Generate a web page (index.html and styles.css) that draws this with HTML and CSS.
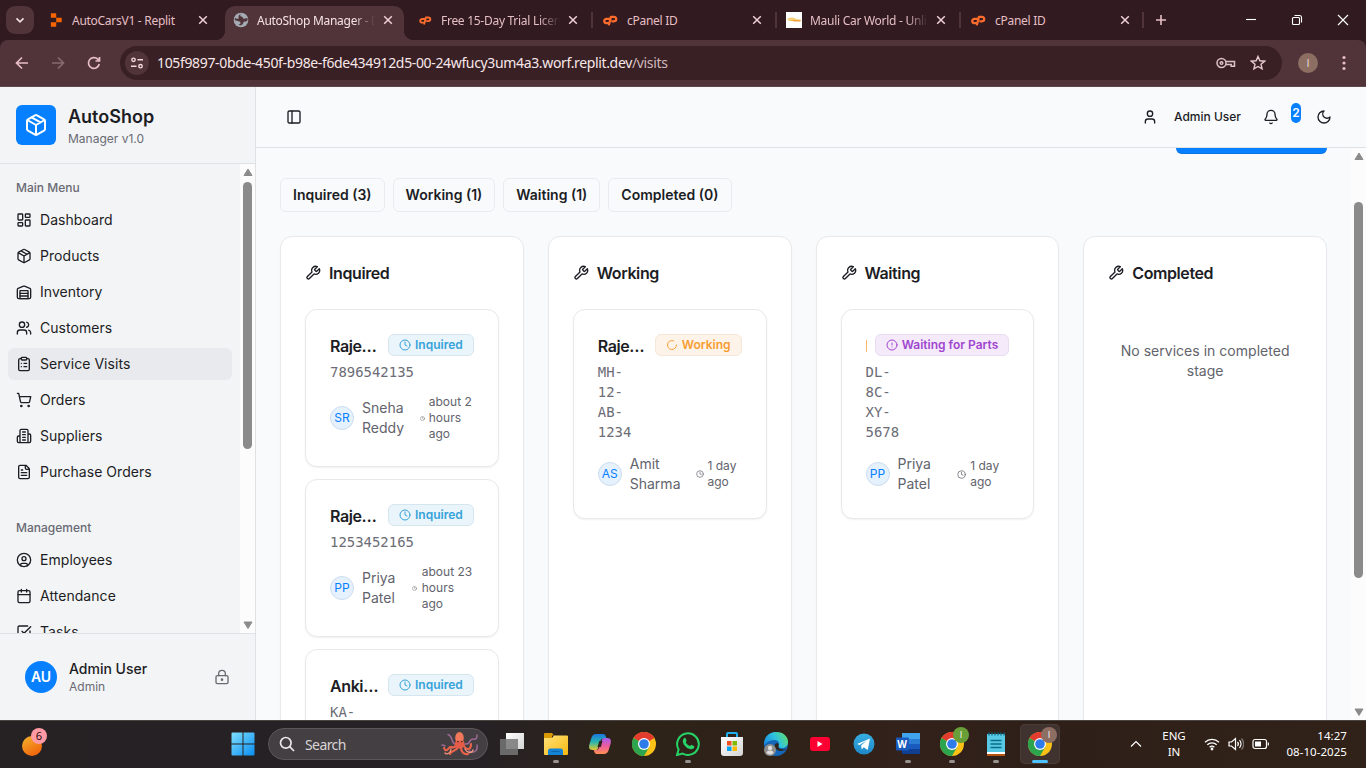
FILE: index.html
```html
<!DOCTYPE html>
<html lang="en">
<head>
<meta charset="utf-8">
<title>AutoShop Manager</title>
<link rel="stylesheet" href="styles.css">
</head>
<body>
<svg class="defs" aria-hidden="true">
  <defs>
    <linearGradient id="g-win" x1="0" y1="0" x2="1" y2="1"><stop offset="0" stop-color="#7fe0ff"/><stop offset="1" stop-color="#0a8df0"/></linearGradient>
    <linearGradient id="g-orange" x1="0" y1="0" x2=".6" y2="1"><stop offset="0" stop-color="#f5b62e"/><stop offset="1" stop-color="#f0640c"/></linearGradient>
    <linearGradient id="g-folder" x1="0" y1="0" x2="1" y2="1"><stop offset="0" stop-color="#ffe27a"/><stop offset="1" stop-color="#f8b80f"/></linearGradient>
    <linearGradient id="g-edge" x1="0" y1=".6" x2="1" y2=".2"><stop offset="0" stop-color="#1a8fe0"/><stop offset=".5" stop-color="#2fc3df"/><stop offset="1" stop-color="#62e06a"/></linearGradient>
    <linearGradient id="g-cop1" x1="0" y1="0" x2="0" y2="1"><stop offset="0" stop-color="#1b78e0"/><stop offset=".5" stop-color="#27b5b0"/><stop offset="1" stop-color="#e6c92c"/></linearGradient>
    <linearGradient id="g-cop2" x1="0" y1="0" x2="0" y2="1"><stop offset="0" stop-color="#a55cf0"/><stop offset=".5" stop-color="#ec5c9c"/><stop offset="1" stop-color="#ff9152"/></linearGradient>
    <linearGradient id="g-gray" x1="0" y1="0" x2="1" y2="1"><stop offset="0" stop-color="#ffffff"/><stop offset="1" stop-color="#d4d4d4"/></linearGradient>
    <linearGradient id="g-tele" x1="0" y1="0" x2="0" y2="1"><stop offset="0" stop-color="#37aee2"/><stop offset="1" stop-color="#1e88c7"/></linearGradient>
  </defs>
  <symbol id="i-x" viewBox="0 0 10 10"><path d="M1.2 1.2l7.6 7.6M8.8 1.2L1.2 8.8"/></symbol>
  <symbol id="i-cp" viewBox="0 0 14 10"><path d="M5.6 3.400H3.400a2 2 0 0 0-.4 4h1.600M5.600 8.700L7.400 1.600h2.900a2 2 0 0 1 0 4.100H8.600"/></symbol>
  <symbol id="i-package" viewBox="0 0 24 24"><path d="m7.5 4.27 9 5.15M21 8a2 2 0 0 0-1-1.73l-7-4a2 2 0 0 0-2 0l-7 4A2 2 0 0 0 3 8v8a2 2 0 0 0 1 1.73l7 4a2 2 0 0 0 2 0l7-4A2 2 0 0 0 21 16ZM3.3 7l8.7 5 8.7-5M12 22V12"/></symbol>
  <symbol id="i-dashboard" viewBox="0 0 24 24"><rect x="3" y="3" width="7" height="9" rx="1"/><rect x="14" y="3" width="7" height="5" rx="1"/><rect x="14" y="12" width="7" height="9" rx="1"/><rect x="3" y="16" width="7" height="5" rx="1"/></symbol>
  <symbol id="i-warehouse" viewBox="0 0 24 24"><path d="M22 8.35V20a2 2 0 0 1-2 2H4a2 2 0 0 1-2-2V8.35A2 2 0 0 1 3.26 6.5l8-3.2a2 2 0 0 1 1.48 0l8 3.2A2 2 0 0 1 22 8.35ZM6 18h12M6 14h12"/><rect x="6" y="10" width="12" height="12"/></symbol>
  <symbol id="i-users" viewBox="0 0 24 24"><path d="M16 21v-2a4 4 0 0 0-4-4H6a4 4 0 0 0-4 4v2M22 21v-2a4 4 0 0 0-3-3.87M16 3.13a4 4 0 0 1 0 7.75"/><circle cx="9" cy="7" r="4"/></symbol>
  <symbol id="i-clipboard" viewBox="0 0 24 24"><rect x="8" y="2" width="8" height="4" rx="1"/><path d="M16 4h2a2 2 0 0 1 2 2v14a2 2 0 0 1-2 2H6a2 2 0 0 1-2-2V6a2 2 0 0 1 2-2h2M12 11h4M12 16h4M8 11h.01M8 16h.01"/></symbol>
  <symbol id="i-cart" viewBox="0 0 24 24"><circle cx="8" cy="21" r="1"/><circle cx="19" cy="21" r="1"/><path d="M2.05 2.05h2l2.66 12.42a2 2 0 0 0 2 1.58h9.78a2 2 0 0 0 1.95-1.57l1.65-7.43H5.12"/></symbol>
  <symbol id="i-building" viewBox="0 0 24 24"><path d="M6 22V4a2 2 0 0 1 2-2h8a2 2 0 0 1 2 2v18ZM6 12H4a2 2 0 0 0-2 2v6a2 2 0 0 0 2 2h2M18 9h2a2 2 0 0 1 2 2v9a2 2 0 0 1-2 2h-2M10 6h4M10 10h4M10 14h4M10 18h4"/></symbol>
  <symbol id="i-file" viewBox="0 0 24 24"><path d="M15 2H6a2 2 0 0 0-2 2v16a2 2 0 0 0 2 2h12a2 2 0 0 0 2-2V7ZM14 2v4a2 2 0 0 0 2 2h4M10 9H8M16 13H8M16 17H8"/></symbol>
  <symbol id="i-usercircle" viewBox="0 0 24 24"><circle cx="12" cy="12" r="10"/><circle cx="12" cy="10" r="3"/><path d="M7 20.662V19a2 2 0 0 1 2-2h6a2 2 0 0 1 2 2v1.662"/></symbol>
  <symbol id="i-calendar" viewBox="0 0 24 24"><path d="M8 2v4M16 2v4M3 10h18"/><rect x="3" y="4" width="18" height="18" rx="2"/></symbol>
  <symbol id="i-check" viewBox="0 0 24 24"><path d="M21 10.5V19a2 2 0 0 1-2 2H5a2 2 0 0 1-2-2V5a2 2 0 0 1 2-2h12.5M9 11l3 3L22 4"/></symbol>
  <symbol id="i-lock" viewBox="0 0 24 24"><circle cx="12" cy="16" r="1"/><rect x="3" y="10" width="18" height="12" rx="2"/><path d="M7 10V7a5 5 0 0 1 10 0v3"/></symbol>
  <symbol id="i-panel" viewBox="0 0 24 24"><rect x="3" y="3" width="18" height="18" rx="2"/><path d="M9 3v18"/></symbol>
  <symbol id="i-user" viewBox="0 0 24 24"><path d="M19 21v-2a4 4 0 0 0-4-4H9a4 4 0 0 0-4 4v2"/><circle cx="12" cy="7" r="4"/></symbol>
  <symbol id="i-bell" viewBox="0 0 24 24"><path d="M10.268 21a2 2 0 0 0 3.464 0M3.262 15.326A1 1 0 0 0 4 17h16a1 1 0 0 0 .74-1.673C19.41 13.956 18 12.499 18 8A6 6 0 0 0 6 8c0 4.499-1.411 5.956-2.738 7.326"/></symbol>
  <symbol id="i-moon" viewBox="0 0 24 24"><path d="M12 3a6 6 0 0 0 9 9 9 9 0 1 1-9-9Z"/></symbol>
  <symbol id="i-wrench" viewBox="0 0 24 24"><path d="M14.7 6.3a1 1 0 0 0 0 1.4l1.6 1.6a1 1 0 0 0 1.4 0l3.77-3.77a6 6 0 0 1-7.94 7.94l-6.91 6.91a2.12 2.12 0 0 1-3-3l6.91-6.91a6 6 0 0 1 7.94-7.94l-3.76 3.76z"/></symbol>
  <symbol id="i-clock" viewBox="0 0 24 24"><circle cx="12" cy="12" r="10"/><path d="M12 6v6l4 2"/></symbol>
  <symbol id="i-loader" viewBox="0 0 24 24"><path d="M21 12a9 9 0 1 1-6.219-8.56"/></symbol>
  <symbol id="i-alert" viewBox="0 0 24 24"><circle cx="12" cy="12" r="10"/><path d="M12 8v4M12 16h.01"/></symbol>
  <symbol id="i-chrome" viewBox="0 0 24 24"><circle cx="12" cy="12" r="12" fill="#fbc116"/><path d="M12 12L1.600 6A12 12 0 0 1 22.400 6Z" fill="#e33b2e"/><path d="M12 12L1.600 6A12 12 0 0 0 12 24L17.200 15Z" fill="#2da44e"/><circle cx="12" cy="12" r="6" fill="#fff"/><circle cx="12" cy="12" r="4.800" fill="#2f7bea"/></symbol>
</svg>

<header class="tabstrip">
  <button class="tabsearch"><svg viewBox="0 0 10 10"><path d="M1.500 3.300L5 6.800l3.500-3.500"/></svg></button>
  <div class="tab tab-first"><svg class="fav" viewBox="0 0 12 14"><path fill="#fa6400" d="M1.500 1h4.700v4H1.500zM6.200 5H11v4H6.200zM1.500 9h4.700v4H1.500z"/></svg><span class="tt">AutoCarsV1 - Replit</span><svg class="close"><use href="#i-x"/></svg></div>
  <div class="tab tab-active"><svg class="fav" viewBox="0 0 16 16"><circle cx="8" cy="8" r="7.300" fill="#a3aab1"/><path fill="#513439" d="M9 1.600C7 2 6.800 3.300 7.600 4.200c.6.700 2 .4 2.200 1.400.2 1.200 1.500 1.500 2.400 1 .8-.4 1.700-.3 2.600.2-.1 2-1 2.700-2.400 2.600-1.300 0-1.900.5-2.200 1.500-.4 1.500-1.700 2.300-3.300 2.300-.6 0-1-.2-1.400-.5 1.500-.2 2.200-.9 2-2.100C7.200 9 5.200 9 1.800 8.200c-.1-.9 0-1.500.2-2.200 1.300 1 2.800 1 3.900.2C5 5 5.800 2.200 9 1.600Z"/></svg><span class="tt fade">AutoShop Manager - Dashboard</span><svg class="close"><use href="#i-x"/></svg></div>
  <div class="tab"><svg class="fav cp small"><use href="#i-cp"/></svg><span class="tt fade">Free 15-Day Trial License</span><svg class="close"><use href="#i-x"/></svg></div>
  <div class="tab sep"><svg class="fav cp"><use href="#i-cp"/></svg><span class="tt">cPanel ID</span><svg class="close"><use href="#i-x"/></svg></div>
  <div class="tab sep"><svg class="fav" viewBox="0 0 16 16"><path fill="#fff" d="M0 0h16v16H0z"/><path fill="#f8d27a" d="M1 7c3-2 7-2 9 0l5 .7v1.200H3Z"/><path fill="#f2a13c" d="M4 8h10.500v1.600H8Z"/></svg><span class="tt fade">Mauli Car World - Unlimited</span><svg class="close"><use href="#i-x"/></svg></div>
  <div class="tab sep tab-last"><svg class="fav cp"><use href="#i-cp"/></svg><span class="tt">cPanel ID</span><svg class="close"><use href="#i-x"/></svg></div>
  <svg class="newtab" viewBox="0 0 12 12"><path d="M6 1v10M1 6h10"/></svg>
  <div class="winctl">
    <svg viewBox="0 0 12 12"><path d="M1 5.500h10"/></svg>
    <svg viewBox="0 0 12 12"><rect x="1.500" y="3.500" width="7" height="7" rx="1"/><path d="M3.500 1.500h5a2 2 0 0 1 2 2v5"/></svg>
    <svg viewBox="0 0 12 12"><path d="M1 1l10 10M11 1L1 11"/></svg>
  </div>
</header>

<div class="toolbar">
  <svg class="nav" viewBox="0 0 16 16"><path d="M14 8H2.500M8 2.500L2.500 8 8 13.500"/></svg>
  <svg class="nav dim" viewBox="0 0 16 16"><path d="M2 8h11.500M8 2.500L13.500 8 8 13.500"/></svg>
  <svg class="nav" viewBox="0 0 16 16"><path d="M13.200 9A5.400 5.400 0 1 1 11.800 4.200L13.300 5.700M13.500 2v4H9.500"/></svg>
  <div class="urlbar">
    <span class="siteinfo"><svg viewBox="0 0 14 14"><circle cx="3.500" cy="3.800" r="1.700"/><path d="M7.500 3.800H13M1 10.200h5.500"/><circle cx="10.500" cy="10.200" r="1.700"/></svg></span>
    <span class="url">105f9897-0bde-450f-b98e-f6de434912d5-00-24wfucy3um4a3.worf.replit.dev<i>/visits</i></span>
    <svg class="key" viewBox="0 0 20 12"><circle cx="5.500" cy="6" r="4.500"/><circle cx="5.500" cy="6" r="1.300"/><path d="M9.800 4.500H18.500V9.300h-3.300V7.500H9.800"/></svg>
    <svg class="star" viewBox="0 0 16 16"><path d="M8 1.500l1.900 4.300 4.700.4-3.600 3.100 1.100 4.600L8 11.500l-4.100 2.400L5 9.300 1.400 6.200l4.700-.4Z"/></svg>
  </div>
  <span class="profile">I</span>
  <svg class="dots" viewBox="0 0 4 16"><circle cx="2" cy="2.500" r="1.600"/><circle cx="2" cy="8" r="1.600"/><circle cx="2" cy="13.500" r="1.600"/></svg>
</div>

<div class="app">
  <aside class="sidebar">
    <div class="brand"><span class="logo"><svg class="ic"><use href="#i-package"/></svg></span><div><h1>AutoShop</h1><p>Manager v1.0</p></div></div>
    <div class="menuwrap">
      <nav class="menu">
        <h2>Main Menu</h2>
        <a><svg class="ic"><use href="#i-dashboard"/></svg><span>Dashboard</span></a>
        <a><svg class="ic"><use href="#i-package"/></svg><span>Products</span></a>
        <a><svg class="ic"><use href="#i-warehouse"/></svg><span>Inventory</span></a>
        <a><svg class="ic"><use href="#i-users"/></svg><span>Customers</span></a>
        <a class="on"><svg class="ic"><use href="#i-clipboard"/></svg><span>Service Visits</span></a>
        <a><svg class="ic"><use href="#i-cart"/></svg><span>Orders</span></a>
        <a><svg class="ic"><use href="#i-building"/></svg><span>Suppliers</span></a>
        <a><svg class="ic"><use href="#i-file"/></svg><span>Purchase Orders</span></a>
        <h2 class="second">Management</h2>
        <a><svg class="ic"><use href="#i-usercircle"/></svg><span>Employees</span></a>
        <a><svg class="ic"><use href="#i-calendar"/></svg><span>Attendance</span></a>
        <a><svg class="ic"><use href="#i-check"/></svg><span>Tasks</span></a>
      </nav>
      <div class="scroll side"><svg viewBox="0 0 9 8"><path d="M4.500 1L8.500 7.500H.5Z"/></svg><span class="thumb"></span><svg class="down" viewBox="0 0 9 8"><path d="M4.500 7.500L8.500 1H.5Z"/></svg></div>
    </div>
    <div class="account"><span class="avatar">AU</span><div><b>Admin User</b><small>Admin</small></div><svg class="ic"><use href="#i-lock"/></svg></div>
  </aside>

  <div class="page">
    <header class="topbar">
      <svg class="ic"><use href="#i-panel"/></svg>
      <div class="right"><svg class="ic"><use href="#i-user"/></svg><span class="who">Admin User</span><svg class="ic bell"><use href="#i-bell"/></svg><span class="count">2</span><svg class="ic"><use href="#i-moon"/></svg></div>
    </header>
    <div class="body">
      <main class="content">
        <div class="action"></div>
        <div class="chips"><span>Inquired (3)</span><span>Working (1)</span><span>Waiting (1)</span><span>Completed (0)</span></div>
        <div class="board">
          <section class="col">
            <h3><svg class="ic"><use href="#i-wrench"/></svg>Inquired</h3>
            <article class="card">
              <div class="top"><div class="id"><b>Rajesh Kumar</b><code>7896542135</code></div><span class="badge blue"><svg class="ic"><use href="#i-clock"/></svg><span>Inquired</span></span></div>
              <div class="foot"><span class="av">SR</span><span class="nm">Sneha<br>Reddy</span><span class="when"><svg class="ic t6"><use href="#i-clock"/></svg><span>about 2<br>hours<br>ago</span></span></div>
            </article>
            <article class="card">
              <div class="top"><div class="id"><b>Rajesh Kumar</b><code>1253452165</code></div><span class="badge blue"><svg class="ic"><use href="#i-clock"/></svg><span>Inquired</span></span></div>
              <div class="foot"><span class="av">PP</span><span class="nm">Priya<br>Patel</span><span class="when"><svg class="ic t6"><use href="#i-clock"/></svg><span>about 23<br>hours<br>ago</span></span></div>
            </article>
            <article class="card">
              <div class="top"><div class="id"><b>Ankit Sharma</b><code>KA-</code></div><span class="badge blue"><svg class="ic"><use href="#i-clock"/></svg><span>Inquired</span></span></div>
            </article>
          </section>
          <section class="col">
            <h3><svg class="ic"><use href="#i-wrench"/></svg>Working</h3>
            <article class="card">
              <div class="top"><div class="id"><b>Rajesh Kumar</b><code>MH-<br>12-<br>AB-<br>1234</code></div><span class="badge orange"><svg class="ic"><use href="#i-loader"/></svg><span>Working</span></span></div>
              <div class="foot"><span class="av">AS</span><span class="nm">Amit<br>Sharma</span><span class="when w8"><svg class="ic"><use href="#i-clock"/></svg><span>1 day<br>ago</span></span></div>
            </article>
          </section>
          <section class="col">
            <h3><svg class="ic"><use href="#i-wrench"/></svg>Waiting</h3>
            <article class="card">
              <div class="top"><div class="id"><b class="sliver"></b><code>DL-<br>8C-<br>XY-<br>5678</code></div><span class="badge purple"><svg class="ic"><use href="#i-alert"/></svg><span>Waiting for Parts</span></span></div>
              <div class="foot"><span class="av">PP</span><span class="nm">Priya<br>Patel</span><span class="when w9"><svg class="ic"><use href="#i-clock"/></svg><span>1 day<br>ago</span></span></div>
            </article>
          </section>
          <section class="col">
            <h3><svg class="ic"><use href="#i-wrench"/></svg>Completed</h3>
            <p class="empty">No services in completed stage</p>
          </section>
        </div>
      </main>
      <div class="scroll main"><svg viewBox="0 0 9 8"><path d="M4.500 1L8.500 7.500H.5Z"/></svg><span class="thumb"></span><svg class="down" viewBox="0 0 9 8"><path d="M4.500 7.500L8.500 1H.5Z"/></svg></div>
    </div>
  </div>
</div>

<footer class="taskbar">
  <div class="widget"><svg viewBox="0 0 28 28"><circle cx="11" cy="17" r="10" fill="url(#g-orange)"/></svg><span>6</span></div>
  <svg class="start" viewBox="0 0 24 24"><path fill="url(#g-win)" d="M.5 1.500Q.5.500 1.500.500h10v11H.5zM12.500.500h10q1 0 1 1v10h-11zM.5 12.500h11v11h-10q-1 0-1-1zM12.500 12.500h11v10q0 1-1 1h-10z"/></svg>
  <div class="search">
    <svg class="lens" viewBox="0 0 16 16"><circle cx="6.800" cy="6.800" r="5.300"/><path d="M10.700 10.700L15 15"/></svg><span>Search</span>
    <svg class="octo" viewBox="0 0 38 26"><g fill="none" stroke-linecap="round"><path stroke="#9c6a94" stroke-width="1.500" d="M14 13C10 12 12 5 7 3.500M4 15c-1-1-3-1-3-1M24 13c6 1 4-6 8-5s4-2 4-4M28 20c6 3 9-1 8-6"/><path stroke="#e9624a" stroke-width="2.200" d="M16 14C12 19 10 14 8 17s-4 3-5 0M17 16c-2 5-7 3-8 7M20 16c0 5 3 8 7 7M22 14c4 6 8 5 8-1"/><path stroke="#f2957b" stroke-width="1.300" d="M10 18c0 4-4 6-6 4M24 18c2 4 7 5 8 1"/></g><ellipse cx="18.500" cy="7" rx="4.300" ry="6" fill="#f1785b"/><path fill="#e45c48" d="M14.500 10h8.500l1 5-5 3-5.500-3Z"/><circle cx="17" cy="10.500" r=".8" fill="#402028"/><circle cx="20.800" cy="10.500" r=".8" fill="#402028"/></svg>
  </div>
  <div class="apps">
    <span><svg viewBox="0 0 26 24"><path fill="url(#g-gray)" d="M7 1h18v16H7z"/><path fill="#777" fill-opacity=".85" d="M1 7h18v16H1z"/></svg></span>
    <span class="run"><svg viewBox="0 0 26 24"><path fill="#d79a06" d="M1 2q0-1 1-1h7l2 2.500h-2V7H1z"/><path fill="url(#g-folder)" d="M1 6h8l2-2.500h13q1 0 1 1V22q0 1-1 1H2q-1 0-1-1z"/><path fill="#1583d5" d="M5 23v-4q0-2.500 2.500-2.500h10q2.500 0 2.500 2.500v4z"/><path stroke="#0b66ad" d="M8.500 19.500h8"/></svg></span>
    <span><svg viewBox="0 0 26 24"><path fill="url(#g-cop1)" d="M9 2h7c2 0 2.300 1 3 3l.5 1.500h-3c-2 0-2.600 1-3.200 3L11 16c-.6 2-1.500 2-3 2H5.500C2 18 1.500 15 2.500 12l2.200-7C5.500 3 7 2 9 2Z"/><path fill="url(#g-cop2)" d="M17 22h-7c-2 0-2.300-1-3-3l-.3-1H9c2 0 2.600-1 3.200-3L15 8c.6-2 1.500-2 3-2h2.500c3.500 0 4 3 3 6l-2.200 7c-.8 2-2.300 3-4.300 3Z"/><path fill="#302319" d="M12.300 9h3.200l-1.700 6h-3.300z"/></svg></span>
    <span><svg class="chrome"><use href="#i-chrome"/></svg></span>
    <span class="run"><svg viewBox="0 0 26 24"><path fill="none" stroke="#25d366" stroke-width="2" d="M2 23l1.600-5.500A10.800 10.800 0 1 1 7.600 21.500Z"/><path fill="#25d366" d="M9 6.300c.7-.7 1.300-.5 1.700.3l.8 1.900c.3.8-1 1.500-.6 2.100 1 1.700 2 2.600 3.900 3.400.7.300 1.100-1.400 1.900-1.100l2.200 1.100c.9.500.3 2-.4 2.500-2.400 1.600-5.500.2-7.500-1.600C8.500 12.900 6.400 9 9 6.300Z"/></svg></span>
    <span><svg viewBox="0 0 26 24"><path fill="none" stroke="#20b0ee" stroke-width="2" d="M8 6V2q0-1 1-1h8q1 0 1 1v4"/><path fill="url(#g-gray)" d="M2 5h22v16q0 3-3 3H5q-3 0-3-3z"/><path fill="#f25022" d="M8 9h4.500v4.500H8z"/><path fill="#7fba00" d="M13.500 9H18v4.500h-4.500z"/><path fill="#00a4ef" d="M8 14.500h4.500V19H8z"/><path fill="#ffb900" d="M13.500 14.500H18V19h-4.500z"/></svg></span>
    <span><svg viewBox="0 0 26 24"><circle cx="13" cy="12" r="12" fill="#1467b8"/><path fill="url(#g-edge)" d="M1 13C1 5 6 0 13 0c8 0 12 5 12 10 0 4-3 6-6 6-2.500 0-4-1-3.500-2 2-3-.5-6-4-6C6 8 3 11 1 13Z"/><path fill="#302319" d="M15.500 14c-.8 2 2 4.500 8.500 3-3 2-8 3-11 0-2-2-2-5 1-6 1.500.5 2 1.500 1.500 3Z"/><circle cx="7" cy="18" r="6" fill="#8c8c8c"/><circle cx="7" cy="16" r="2.200" fill="#ddd"/><path fill="#ddd" d="M3.500 21q0-2.500 3.500-2.500t3.500 2.500Q7 24 3.500 21Z"/></svg></span>
    <span><svg viewBox="0 0 26 24"><rect x="3" y="5" width="20" height="14" rx="3" fill="#ff0033"/><path fill="#fff" d="M10.500 9l5 3-5 3z"/></svg></span>
    <span><svg viewBox="0 0 26 24"><circle cx="13" cy="12" r="10.500" fill="url(#g-tele)"/><path fill="#fff" d="M6 12l13-5.500-2.300 11.500-4-2.800-2 2.200-.6-4 5.500-4.800-7 4.300Z"/></svg></span>
    <span class="run"><svg viewBox="0 0 26 24"><path fill="#41a5ee" d="M7 1h18v6H7z"/><path fill="#2b7cd3" d="M7 7h18v5H7z"/><path fill="#185abd" d="M7 12h18v5H7z"/><path fill="#103f91" d="M7 17h18v5H7z"/><rect x="1" y="5.500" width="13" height="13" rx="1" fill="#185abd"/></svg><em>W</em></span>
    <span class="run"><svg class="chrome"><use href="#i-chrome"/></svg><i class="pb green">I</i></span>
    <span class="run"><svg viewBox="0 0 26 24"><path fill="#57c9e4" d="M4 2h18v19H4z"/><path fill="#fff" d="M4 20h18v2H4z"/><path fill="#b45412" d="M4 22h18v2H4z"/><path fill="none" stroke="#0c6c88" stroke-width="1.500" d="M7.500 8.500h11M7.500 12h11M7.500 15.500h11"/><path stroke="#0c6c88" stroke-width="1.300" d="M6 .5v3M9 .5v3M12 .5v3M15 .5v3M18 .5v3M21 .5v3"/></svg></span>
    <span class="cur"><svg class="chrome"><use href="#i-chrome"/></svg><i class="pb brown">I</i></span>
  </div>
  <div class="tray">
    <svg class="up" viewBox="0 0 12 8"><path d="M1 6.500l5-5 5 5"/></svg>
    <div class="lang">ENG<br>IN</div>
    <svg class="wifi" viewBox="0 0 16 14"><path d="M1 5.300a10 10 0 0 1 14 0M3.300 7.800a6.700 6.700 0 0 1 9.400 0M5.600 10.200a3.500 3.500 0 0 1 4.800 0"/><circle cx="8" cy="12" r=".8"/></svg>
    <svg class="vol" viewBox="0 0 16 14"><path d="M1 5h2.500L7.500 1.500v11L3.500 9H1ZM9.500 5a3 3 0 0 1 0 4M11.500 3.200a5.500 5.500 0 0 1 0 7.600"/><path opacity=".4" d="M13.500 1.500a8 8 0 0 1 0 11"/></svg>
    <svg class="bat" viewBox="0 0 18 12"><rect x="1" y="1.500" width="13.500" height="9" rx="2"/><path class="f" d="M3 3.500h6v5H3z"/><path d="M16.300 4.500v3"/></svg>
    <div class="clock">14:27<br>08-10-2025</div>
  </div>
</footer>
</body>
</html>
```
FILE: styles.css
```css
* { box-sizing: border-box; }
body { margin: 0; width: 1366px; height: 768px; overflow: hidden; display: flex; flex-direction: column; background: #f9fafc; font-family: Inter, "Liberation Sans", sans-serif; color: #1c1d24; }
h1, h2, h3, p { margin: 0; font-weight: 400; }
.defs { position: absolute; width: 0; height: 0; }
svg { flex: none; display: block; }
.ic { width: 16px; height: 16px; fill: none; stroke: currentColor; stroke-width: 2; stroke-linecap: round; stroke-linejoin: round; }

/* Browser tabs */
.tabstrip { height: 40px; flex: none; background: #311b20; display: flex; align-items: center; font-family: "Noto Sans", "Open Sans", sans-serif; font-size: 12px; color: #e6bfc5; }
.tabsearch { width: 28px; height: 28px; margin: 0 9px 0 6px; padding: 9px; border: 0; border-radius: 9px; background: #513439; }
.tabsearch svg { width: 10px; height: 10px; fill: none; stroke: #f0dcdf; stroke-width: 1.7; }
.tab { width: 184px; height: 40px; padding: 0 14px 0 10px; display: flex; align-items: center; position: relative; }
.tab-first { width: 182px; padding: 0 17px 0 5px; }
.tab-active { width: 179px; height: 34px; align-self: flex-end; padding: 0 11px 6px 8px; background: #513439; border-radius: 10px 10px 0 0; color: #f5e3e5; }
.tab-active::before, .tab-active::after { content: ""; position: absolute; bottom: 0; width: 10px; height: 10px; }
.tab-active::before { left: -10px; background: radial-gradient(circle at 0 0, transparent 10px, #513439 10.5px); }
.tab-active::after { right: -10px; background: radial-gradient(circle at 100% 0, transparent 10px, #513439 10.5px); }
.tab-active + .tab { width: 188px; padding-left: 15px; }
.sep::before { content: ""; position: absolute; left: -1px; top: 12px; width: 2px; height: 16px; background: #513439; }
.tab-last::after { content: ""; position: absolute; right: 0; top: 12px; width: 2px; height: 16px; background: #513439; }
.fav { width: 16px; height: 16px; margin-right: 8px; }
.fav.cp { fill: none; stroke: #ff6c2c; stroke-width: 2.1; stroke-linecap: round; stroke-linejoin: round; width: 15px; height: 11px; margin: 0 9px 0 1px; }
.fav.cp.small { width: 13px; height: 9px; margin: 0 9px 0 0; }
.tt { flex: 1; min-width: 0; padding-top: 2px; overflow: hidden; white-space: nowrap; letter-spacing: -.28px; line-height: 18px; }
.tab .close { margin-left: 8px; }
.fade { -webkit-mask-image: linear-gradient(90deg, #000 82%, transparent 100%); mask-image: linear-gradient(90deg, #000 82%, transparent 100%); }
.close { width: 10px; height: 10px; fill: none; stroke: #f0d0d5; stroke-width: 1.5; }
.newtab { width: 12px; height: 12px; margin-left: 11px; stroke: #e6bfc5; stroke-width: 1.6; }
.winctl { margin-left: auto; margin-right: 17px; display: flex; gap: 34px; }
.winctl svg { width: 12px; height: 12px; fill: none; stroke: #fff; stroke-width: 1.1; }

/* Browser toolbar */
.toolbar { height: 47px; flex: none; display: flex; align-items: center; padding: 0 20px 0 14px; background: #513439; border-bottom: 1px solid #5f474b; border-radius: 8px 8px 0 0; box-shadow: 0 -8px 0 -0px #311b20; clip-path: inset(0); }
.nav { width: 16px; height: 16px; margin-right: 20px; fill: none; stroke: #e8bdc5; stroke-width: 1.7; }
.dim { stroke: #876a70; }
.urlbar { width: 1162px; height: 34px; margin-left: -2px; border-radius: 17px; background: #392024; display: flex; align-items: center; padding: 0 16px 0 5px; }
.siteinfo { width: 24px; height: 24px; border-radius: 50%; background: #513439; padding: 5px; }
.siteinfo svg { width: 14px; height: 14px; fill: none; stroke: #f2d9dc; stroke-width: 1.4; }
.url { margin-left: 8px; flex: 1; font: 14px/20px "Noto Sans", "Open Sans", sans-serif; color: #f7e7e9; letter-spacing: -.35px; white-space: nowrap; }
.url i { font-style: normal; color: #cfb9bc; }
.key { width: 20px; height: 12px; margin-right: 14px; fill: none; stroke: #dcc2c6; stroke-width: 1.5; }
.star { width: 16px; height: 16px; fill: none; stroke: #e8cbd0; stroke-width: 1.4; }
.profile { width: 20px; height: 20px; margin-left: 16px; border-radius: 50%; background: #8d6e63; color: #eadedb; font: 11px/20px "Open Sans", sans-serif; text-align: center; }
.dots { width: 4px; height: 16px; margin-left: auto; fill: #e8bdc5; }

/* Sidebar */
.app { height: 633px; flex: none; display: flex; overflow: hidden; }
.sidebar { width: 256px; flex: none; display: flex; flex-direction: column; background: #f3f4f6; border-right: 1px solid #dfe1e4; }
.brand { height: 77px; flex: none; display: flex; gap: 12px; padding: 18px 16px 0; border-bottom: 1px solid #dfe1e4; }
.logo { width: 40px; height: 40px; padding: 8px; border-radius: 6px; background: #0780ff; color: #fff; }
.logo .ic { width: 24px; height: 24px; }
.brand h1 { font-size: 18px; font-weight: 600; line-height: 24px; }
.brand p { font-size: 12px; line-height: 16px; margin-top: 2px; color: #696a73; }
.menuwrap { height: 469px; flex: none; display: flex; overflow: hidden; }
.menu { width: 240px; padding: 8px; display: flex; flex-direction: column; gap: 4px; font-size: 14px; letter-spacing: .05px; }
.menu h2 { height: 32px; margin-bottom: -4px; padding-left: 8px; flex: none; font-size: 12px; line-height: 32px; font-weight: 500; color: #696a73; letter-spacing: 0; }
.menu .second { margin-top: 20px; }
.menu a { height: 32px; flex: none; display: flex; align-items: center; gap: 8px; padding: 0 8px; border-radius: 6px; }
.menu a span { line-height: 20px; padding-bottom: 1px; }
.menu .on { background: #e9eaed; }
.scroll { width: 15px; flex: none; background: #fcfcfc; display: flex; flex-direction: column; align-items: center; padding: 4px 0; }
.scroll svg { width: 10px; height: 8px; fill: #8b8b8b; stroke: #8b8b8b; stroke-linejoin: round; }
.thumb { width: 9px; border-radius: 5px; background: #8b8b8b; }
.side .thumb { height: 267px; margin-top: 6px; }
.main .thumb { height: 376px; margin-top: 42px; }
.scroll .down { margin-top: auto; }
.account { flex: 1; display: flex; align-items: center; padding: 0 25px; border-top: 1px solid #dfe1e4; }
.avatar { width: 32px; height: 32px; border-radius: 50%; background: #0780ff; color: #fff; font-size: 14px; line-height: 32px; font-weight: 600; text-align: center; margin-right: 12px; }
.account b { display: block; font-size: 14px; line-height: 18px; font-weight: 500; }
.account small { display: block; font-size: 12px; line-height: 17px; color: #696a73; }
.account .ic { margin-left: auto; color: #696a73; }

/* Main area */
.page { flex: 1; min-width: 0; display: flex; flex-direction: column; }
.topbar { height: 61px; flex: none; display: flex; align-items: center; justify-content: space-between; padding: 0 34px 0 30px; border-bottom: 1px solid #dfe1e4; }
.right { display: flex; align-items: center; }
.who { margin: 0 22px 0 16px; padding-bottom: 1px; font-size: 12px; line-height: 18px; font-weight: 500; }
.count { width: 10px; height: 20px; margin: -8px 15px 0 12px; border-radius: 5px; background: #0780ff; color: #fff; font-size: 12px; line-height: 20px; font-weight: 600; display: flex; justify-content: center; }
.body { flex: 1; min-height: 0; display: flex; }
.content { flex: 1; padding: 0 24px; overflow: hidden; }
.action { width: 151px; height: 6px; margin: 0 0 24px auto; background: #0780ff; border-radius: 0 0 6px 6px; border-bottom: 1px solid #0873e3; }
.chips { display: flex; gap: 8px; margin-bottom: 24px; }
.chips span { height: 34px; padding: 0 12px; border: 1px solid #e9ebee; border-radius: 6px; font-size: 14px; line-height: 32px; font-weight: 600; white-space: nowrap; }
.board { display: grid; grid-template-columns: repeat(4, 1fr); gap: 24px; }
.col { height: 600px; min-width: 0; padding: 24px; background: #fff; border: 1px solid #e8e9ec; border-radius: 12px; box-shadow: 0 1px 2px rgba(0, 0, 0, .04); }
.col h3 { height: 24px; display: flex; align-items: center; gap: 8px; margin-bottom: 24px; font-size: 16px; font-weight: 600; letter-spacing: -.4px; }
.card { padding: 24px; margin-bottom: 12px; background: #fff; border: 1px solid #e8e9ec; border-radius: 12px; box-shadow: 0 1px 2px rgba(0, 0, 0, .06); }
.top { display: flex; align-items: flex-start; gap: 8px; }
.id { flex: 1; min-width: 0; }
.id b { display: block; height: 24px; font-size: 16px; line-height: 24px; font-weight: 600; white-space: nowrap; overflow: hidden; text-overflow: ellipsis; letter-spacing: -.4px; }
.id .sliver { width: 1px; background: linear-gradient(transparent 6px, #f9b869 6px, #f9b869 18px, transparent 18px); }
.id code { display: block; margin-top: 4px; font: 13.950px/20px "DejaVu Sans Mono", monospace; color: #6b6c75; white-space: nowrap; }
.badge { height: 22px; padding: 0 10px; flex: none; display: flex; align-items: center; gap: 4px; border: 1px solid; border-radius: 6px; font-size: 12px; font-weight: 600; white-space: nowrap; }
.badge .ic { width: 12px; height: 12px; }
.badge span { line-height: 16px; padding-bottom: 1px; }
.blue { color: #35a2d9; background: #e9f4fb; border-color: #d6e6ef; }
.orange { color: #f79d32; background: #fef3e8; border-color: #f5e6d7; }
.purple { color: #a146cf; background: #f4eafa; border-color: #e9dcf0; }
.foot { display: flex; align-items: center; margin-top: 12px; color: #62636c; }
.av { width: 24px; height: 24px; flex: none; border: 1px solid #cbdcee; border-radius: 50%; background: #e6f1fe; color: #0780ff; font-size: 12px; line-height: 22px; text-align: center; margin-right: 8px; }
.nm { font-size: 14px; line-height: 20px; }
.when { width: 54px; margin-left: auto; display: flex; align-items: center; gap: 4px; font-size: 12px; line-height: 16px; white-space: nowrap; }
.when .ic { width: 8px; height: 8px; }
.when .t6 { width: 5px; height: 5px; }
.card:nth-of-type(2) .when { width: 63px; margin-right: -1px; gap: 5px; }
.when.w8 { width: 46px; }
.when.w9 { width: 52px; }
.w9 .ic { width: 9px; height: 9px; }
.empty { padding: 32px 0; font-size: 14px; line-height: 20px; text-align: center; color: #62636c; letter-spacing: .02px; }

/* Desktop taskbar */
.taskbar { height: 48px; flex: none; display: flex; align-items: center; padding-bottom: 1px; background: linear-gradient(90deg, #262123, #262125 35%, #2d2319 45%, #302218 60%, #33211b 66%, #2e2018 75%, #302119); border-top: 1px solid #494440; font-family: "Noto Sans", "Open Sans", sans-serif; color: #fff; }
.widget { width: 28px; height: 28px; margin-left: 21px; position: relative; top: -1px; }
.widget span { position: absolute; left: 10px; top: -1px; width: 16px; height: 16px; border-radius: 50%; background: #ff99a4; color: #1d1010; font-size: 11px; line-height: 16px; text-align: center; }
.start { width: 24px; height: 24px; margin-left: 182px; }
.search { width: 220px; height: 32px; margin-left: 13px; display: flex; align-items: center; padding: 0 8px 0 10px; background: #443f42; border: 1px solid #5b565a; border-radius: 16px; }
.search span { margin-left: 10px; font-size: 14px; color: #d8d5d7; letter-spacing: -.6px; }
.lens { width: 16px; height: 16px; fill: none; stroke: #e8e8e8; stroke-width: 1.7; }
.octo { width: 38px; height: 26px; margin-left: auto; }
.apps { display: flex; gap: 4px; margin-left: 4px; }
.apps > span { width: 40px; height: 40px; display: flex; align-items: center; justify-content: center; position: relative; border-radius: 5px; }
.apps svg { width: 26px; height: 24px; }
.apps svg.chrome { width: 24px; height: 24px; }
.run::after, .cur::after { content: ""; position: absolute; left: 17px; bottom: 1px; width: 6px; height: 3px; border-radius: 2px; background: #98928f; }
.apps .cur { background: #40332f; box-shadow: inset 0 0 0 1px #4a3d38; }
.cur::after { left: 12px; width: 16px; background: #4cc2ff; }
.apps em { position: absolute; left: 8px; top: 13px; width: 12px; font: 700 10px/14px "Open Sans", sans-serif; text-align: center; }
.pb { position: absolute; left: 21px; top: 3px; width: 16px; height: 16px; border-radius: 50%; font: 9px/16px "Open Sans", sans-serif; text-align: center; }
.green { background: #689f38; }
.brown { background: #8d6e63; }
.tray { margin-left: auto; margin-right: 19px; display: flex; align-items: center; font-size: 11.500px; line-height: 16px; }
.tray svg { fill: none; stroke: #fff; stroke-width: 1.2; }
.up { width: 12px; height: 8px; margin-right: 20px; }
.lang { width: 24px; text-align: center; margin-right: 18px; }
.wifi { width: 16px; height: 14px; margin-right: 8px; }
.vol { width: 16px; height: 14px; margin-right: 8px; }
.bat { width: 18px; height: 12px; margin-right: 13px; }
.bat .f { fill: #fff; stroke: none; }
.clock { width: 64px; text-align: right; white-space: nowrap; letter-spacing: .05px; }
```
